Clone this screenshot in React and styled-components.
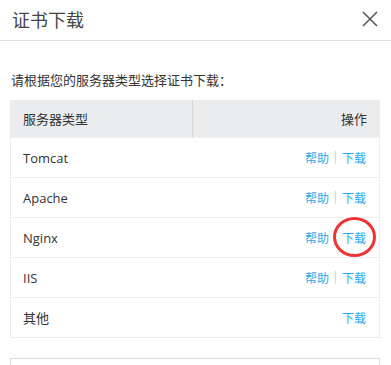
import React from 'react'
import styled, { createGlobalStyle } from 'styled-components'

const GlobalStyle = createGlobalStyle`
  body {
    margin: 0;
    background: #fff;
    font-family: "Open Sans", "Noto Sans CJK SC", sans-serif;
    color: #333;
  }
`

const Dialog = styled.div`
  width: 391px;
  height: 365px;
  overflow: hidden;
  background: #fff;
`

const Header = styled.div`
  height: 41px;
  display: flex;
  align-items: center;
  justify-content: space-between;
  padding: 0 12px 0 12px;
  box-sizing: border-box;
  border-bottom: 1px solid #e0e0e0;
`

const Title = styled.h2`
  margin: 0 0 2px;
  font-size: 18px;
  font-weight: normal;
  color: #444;
  font-family: "Noto Sans CJK SC", sans-serif;
`

const Close = styled.button`
  border: 0;
  background: none;
  padding: 0;
  width: 16px;
  height: 16px;
  margin: 0 1px 2px 0;
  display: flex;
`

const Body = styled.div`
  padding: 30px 11px 0 10px;
`

const Hint = styled.p`
  margin: 0 0 11px 1px;
  font-size: 13px;
  line-height: 18px;
  color: #333;
  font-family: "Noto Sans CJK SC", sans-serif;
`

const Table = styled.div`
  border: 1px solid #ececec;
  border-top: 0;
`

const HeadRow = styled.div`
  display: grid;
  grid-template-columns: 181px 1fr;
  height: 37px;
  background: #ebeced;
  font-size: 13px;
  font-family: "Noto Sans CJK SC", sans-serif;
  color: #333;
`

const HeadCell = styled.div`
  display: flex;
  align-items: center;
  padding: 0 12px;
  justify-content: ${p => (p.right ? 'flex-end' : 'flex-start')};
  border-left: ${p => (p.right ? '1px solid #d6d6d6' : '0')};
`

const Row = styled.div`
  display: flex;
  align-items: center;
  justify-content: space-between;
  height: 40px;
  box-sizing: border-box;
  padding: 0 13px 0 12px;
  border-top: 1px solid #efefef;
  font-size: 13px;
  color: #333;
`

const Name = styled.span`
  font-family: "Open Sans", "Noto Sans CJK SC", sans-serif;
`

const Actions = styled.div`
  display: flex;
  align-items: center;
  gap: 6px;
`

const Link = styled.a`
  color: #2ea7ee;
  font-size: 12px;
  font-family: "Noto Sans CJK SC", sans-serif;
  text-decoration: none;
  position: relative;
`

const Sep = styled.span`
  width: 1px;
  height: 13px;
  background: #d8d8d8;
`

const Circle = styled.span`
  position: absolute;
  left: -9px;
  top: -12px;
  width: 37px;
  height: 34px;
  border: 3px solid #ee3333;
  border-radius: 50%;
`

const NextBox = styled.div`
  margin-top: 20px;
  height: 20px;
  border: 1px solid #dcdcdc;
`

const servers = [
  { name: 'Tomcat', help: true },
  { name: 'Apache', help: true },
  { name: 'Nginx', help: true, marked: true },
  { name: 'IIS', help: true },
  { name: '其他', help: false },
]

export default function App() {
  return (
    <Dialog>
      <GlobalStyle />
      <Header>
        <Title>证书下载</Title>
        <Close aria-label="关闭">
          <svg width="16" height="16" viewBox="0 0 16 16">
            <path d="M1 1L15 15M15 1L1 15" stroke="#555" strokeWidth="1.5" fill="none" />
          </svg>
        </Close>
      </Header>
      <Body>
        <Hint>请根据您的服务器类型选择证书下载：</Hint>
        <Table>
          <HeadRow>
            <HeadCell>服务器类型</HeadCell>
            <HeadCell right>操作</HeadCell>
          </HeadRow>
          {servers.map(s => (
            <Row key={s.name}>
              <Name>{s.name}</Name>
              <Actions>
                {s.help && <Link href="#">帮助</Link>}
                {s.help && <Sep />}
                <Link href="#">
                  下载
                  {s.marked && <Circle />}
                </Link>
              </Actions>
            </Row>
          ))}
        </Table>
        <NextBox />
      </Body>
    </Dialog>
  )
}
